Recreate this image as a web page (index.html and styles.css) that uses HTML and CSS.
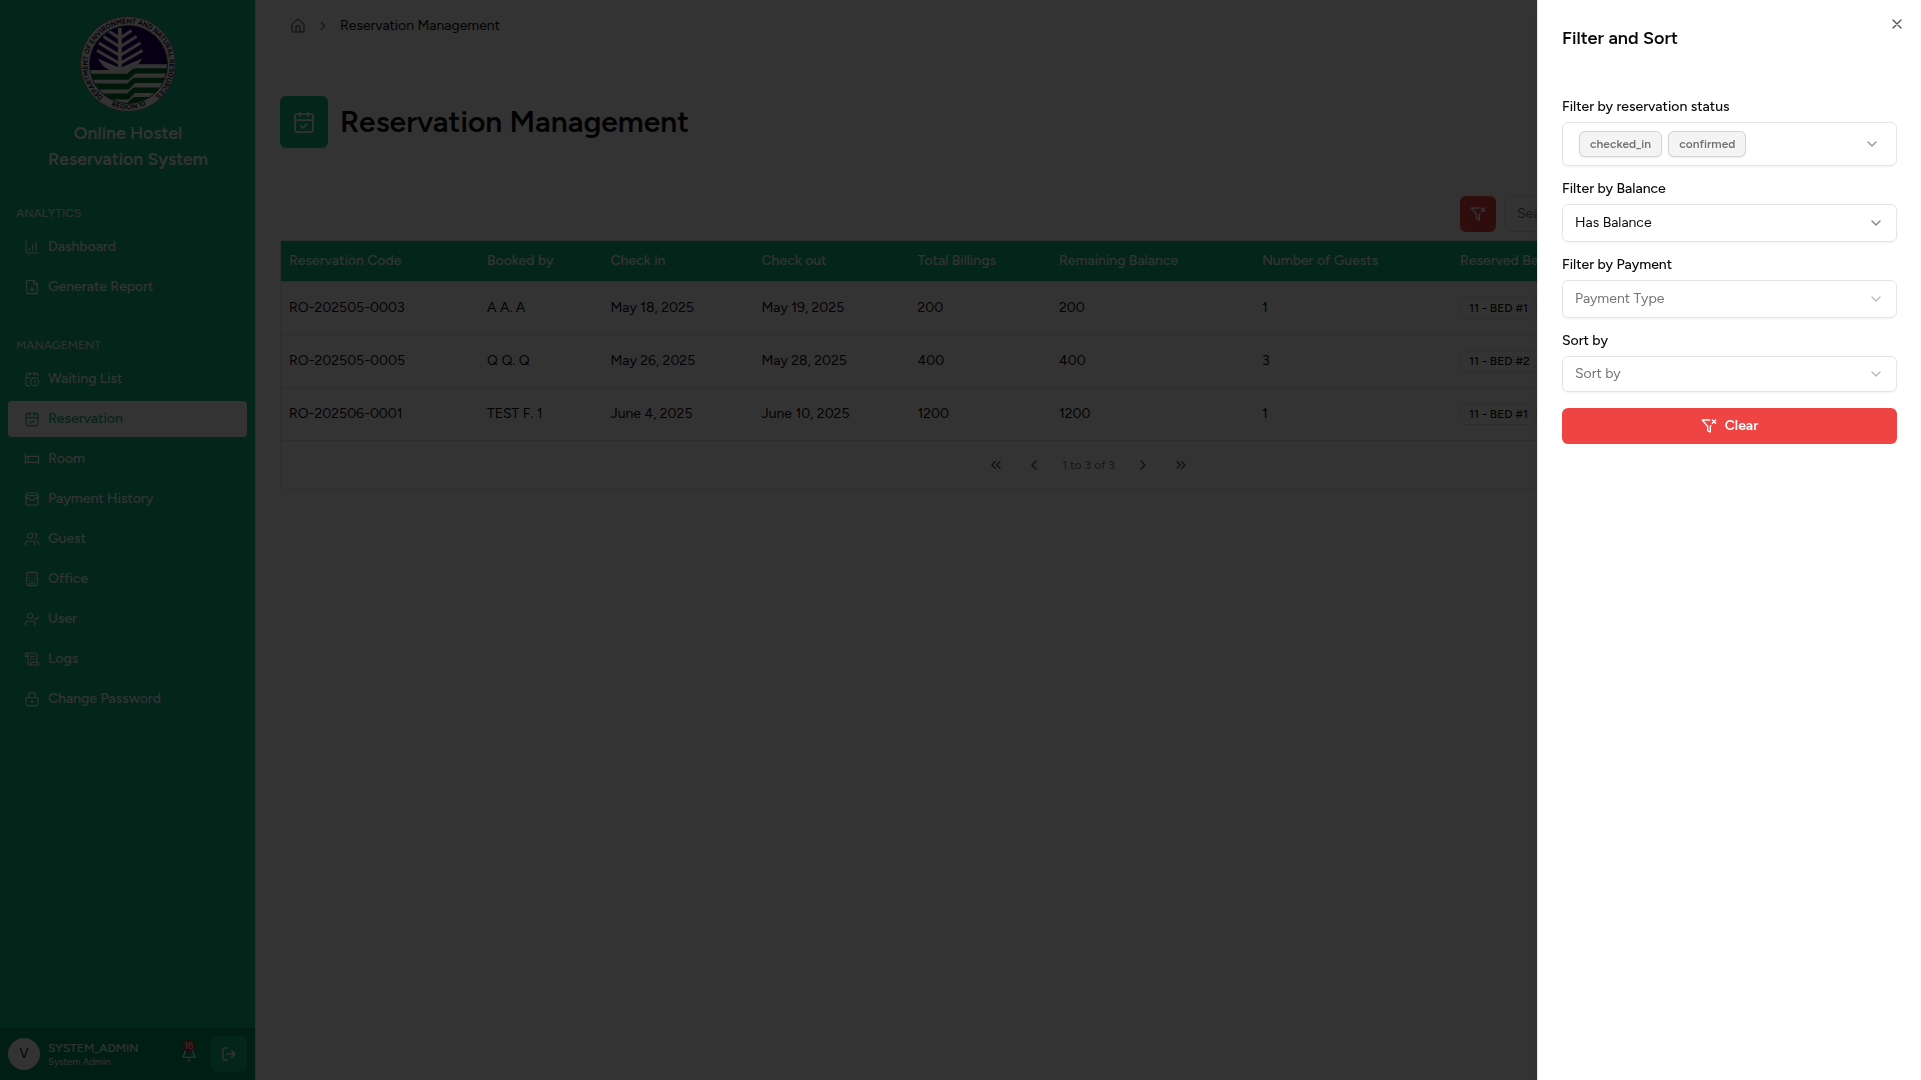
FILE: index.html
```html
<!DOCTYPE html>
<html lang="en">
<head>
<meta charset="utf-8">
<title>Reservation Management</title>
<link rel="stylesheet" href="styles.css">
</head>
<body>
<svg class="sprite" aria-hidden="true">
  <symbol id="chart" viewBox="0 0 24 24"><path d="M13 17V9M18 17V5M3 3v16a2 2 0 0 0 2 2h16M8 17v-3"/></symbol>
  <symbol id="file-down" viewBox="0 0 24 24"><path d="M15 2H6a2 2 0 0 0-2 2v16a2 2 0 0 0 2 2h12a2 2 0 0 0 2-2V7ZM14 2v4a2 2 0 0 0 2 2h4M12 18v-6M9 15l3 3 3-3"/></symbol>
  <symbol id="calendar-clock" viewBox="0 0 24 24"><path d="M21 7.5V6a2 2 0 0 0-2-2H5a2 2 0 0 0-2 2v14a2 2 0 0 0 2 2h3.5M16 2v4M8 2v4M3 10h5M17.5 17.5 16 16.3V14"/><circle cx="16" cy="16" r="6"/></symbol>
  <symbol id="calendar-check" viewBox="0 0 24 24"><path d="M8 2v4M16 2v4M3 10h18M9 16l2 2 4-4"/><rect x="3" y="4" width="18" height="18" rx="2"/></symbol>
  <symbol id="bed" viewBox="0 0 24 24"><path d="M2 4v16M2 8h18a2 2 0 0 1 2 2v10M2 17h20M6 8v9"/></symbol>
  <symbol id="wallet" viewBox="0 0 24 24"><rect x="3" y="3" width="18" height="18" rx="2"/><path d="M3 9a2 2 0 0 1 2-2h14a2 2 0 0 1 2 2M3 11h3c.8 0 1.6.3 2.1.9l1.1.9c1.6 1.6 4.1 1.6 5.7 0l1.1-.9c.5-.5 1.3-.9 2.1-.9H21"/></symbol>
  <symbol id="users" viewBox="0 0 24 24"><path d="M16 21v-2a4 4 0 0 0-4-4H6a4 4 0 0 0-4 4v2M22 21v-2a4 4 0 0 0-3-3.87M16 3.13a4 4 0 0 1 0 7.75"/><circle cx="9" cy="7" r="4"/></symbol>
  <symbol id="building" viewBox="0 0 24 24"><rect x="4" y="2" width="16" height="20" rx="2"/><path d="M9 22v-4h6v4M8 6h.01M16 6h.01M12 6h.01M12 10h.01M12 14h.01M16 10h.01M16 14h.01M8 10h.01M8 14h.01"/></symbol>
  <symbol id="user-check" viewBox="0 0 24 24"><path d="M16 21v-2a4 4 0 0 0-4-4H6a4 4 0 0 0-4 4v2M16 11l2 2 4-4"/><circle cx="9" cy="7" r="4"/></symbol>
  <symbol id="scroll" viewBox="0 0 24 24"><path d="M15 12h-5M15 8h-5M19 17V5a2 2 0 0 0-2-2H4M8 21h12a2 2 0 0 0 2-2v-1a1 1 0 0 0-1-1H11a1 1 0 0 0-1 1v1a2 2 0 1 1-4 0V5a2 2 0 1 0-4 0v2a1 1 0 0 0 1 1h3"/></symbol>
  <symbol id="lock" viewBox="0 0 24 24"><circle cx="12" cy="16" r="1"/><rect x="3" y="10" width="18" height="12" rx="2"/><path d="M7 10V7a5 5 0 0 1 10 0v3"/></symbol>
  <symbol id="house" viewBox="0 0 24 24"><path d="M15 21v-8a1 1 0 0 0-1-1h-4a1 1 0 0 0-1 1v8M3 10a2 2 0 0 1 .709-1.528l7-5.999a2 2 0 0 1 2.582 0l7 5.999A2 2 0 0 1 21 10v9a2 2 0 0 1-2 2H5a2 2 0 0 1-2-2z"/></symbol>
  <symbol id="bell" viewBox="0 0 24 24"><path d="M10.268 21a2 2 0 0 0 3.464 0M3.262 15.326A1 1 0 0 0 4 17h16a1 1 0 0 0 .74-1.673C19.41 13.956 18 12.499 18 8A6 6 0 0 0 6 8c0 4.499-1.411 5.956-2.738 7.326"/></symbol>
  <symbol id="log-out" viewBox="0 0 24 24"><path d="M9 21H5a2 2 0 0 1-2-2V5a2 2 0 0 1 2-2h4M16 17l5-5-5-5M21 12H9"/></symbol>
  <symbol id="filter-x" viewBox="0 0 24 24"><path d="M13.013 3H2l8 9.46V19l4 2v-8.54l.9-1.055M22 3l-5 5M17 3l5 5"/></symbol>
  <symbol id="right" viewBox="0 0 24 24"><path d="m9 18 6-6-6-6"/></symbol>
  <symbol id="left" viewBox="0 0 24 24"><path d="m15 18-6-6 6-6"/></symbol>
  <symbol id="first" viewBox="0 0 24 24"><path d="m11 17-5-5 5-5M18 17l-5-5 5-5"/></symbol>
  <symbol id="last" viewBox="0 0 24 24"><path d="m6 17 5-5-5-5M13 17l5-5-5-5"/></symbol>
  <symbol id="down" viewBox="0 0 24 24"><path d="m6 9 6 6 6-6"/></symbol>
  <symbol id="x" viewBox="0 0 24 24"><path d="M18 6 6 18M6 6l12 12"/></symbol>
</svg>

<div class="app">
  <aside class="sidebar">
    <div class="brand">
      <svg class="logo" viewBox="0 0 96 96">
        <defs>
          <clipPath id="disc"><circle cx="48.5" cy="48.5" r="38.8"/></clipPath>
          <path id="arc-top" d="M23.3 80.8A41 41 0 1 1 73.7 80.8"/>
          <path id="arc-bottom" d="M27 88A45.8 45.8 0 0 0 69 88"/>
        </defs>
        <circle cx="48" cy="48" r="47.5" fill="#fff" stroke="#777" stroke-width="1"/>
        <g clip-path="url(#disc)">
          <rect width="96" height="96" fill="#230069"/>
          <path d="M0 54H47L54 48.3H96V96H0Z" fill="#fff"/>
          <g fill="#00702f">
            <path d="M0 57.7H47L53.5 52.3H96V57.5H55L48.5 63.7H0Z"/>
            <path d="M0 67.5H47L53.5 61.7H96V67H55L48.5 73.5H0Z"/>
            <path d="M0 77.5H47L53.5 71.5H96V77H55L48.5 83.5H0Z"/>
            <path d="M47 87.3L53.5 81H96V90H47Z"/>
          </g>
          <g fill="none" stroke="#fff" stroke-width="3">
            <path d="M39.8 12V55" stroke-width="3.8"/>
            <path d="M28 14.5 39.8 22.5 51.5 14.5M23.5 20.5 39.8 31 56.5 20.5M19 27 39.8 39.5 60.5 27M17 34.5 39.8 47.5 62.5 34.5"/>
          </g>
          <path d="M18 42.5 39.8 52 62 42.5Q58 51 50 54.5H30Q22 51 18 42.5Z" fill="#fff"/>
        </g>
        <circle cx="48.5" cy="48.5" r="39" fill="none" stroke="#222" stroke-width=".8"/>
        <text class="seal"><textPath href="#arc-top" textLength="201" lengthAdjust="spacingAndGlyphs">DEPARTMENT OF ENVIRONMENT AND NATURAL RESOURCES</textPath></text>
        <text class="seal seal-green"><textPath href="#arc-bottom" startOffset="4.5" textLength="36" lengthAdjust="spacingAndGlyphs">REGION 10</textPath></text>
      </svg>
      <div class="brand-name">Online Hostel<br>Reservation System</div>
    </div>
    <nav>
      <div class="group-label">ANALYTICS</div>
      <a class="item"><svg class="icon"><use href="#chart"/></svg>Dashboard</a>
      <a class="item"><svg class="icon"><use href="#file-down"/></svg>Generate Report</a>
      <div class="group-label second">MANAGEMENT</div>
      <a class="item"><svg class="icon"><use href="#calendar-clock"/></svg>Waiting List</a>
      <a class="item active"><svg class="icon"><use href="#calendar-check"/></svg>Reservation</a>
      <a class="item"><svg class="icon"><use href="#bed"/></svg>Room</a>
      <a class="item"><svg class="icon"><use href="#wallet"/></svg>Payment History</a>
      <a class="item"><svg class="icon"><use href="#users"/></svg>Guest</a>
      <a class="item"><svg class="icon"><use href="#building"/></svg>Office</a>
      <a class="item"><svg class="icon"><use href="#user-check"/></svg>User</a>
      <a class="item"><svg class="icon"><use href="#scroll"/></svg>Logs</a>
      <a class="item"><svg class="icon"><use href="#lock"/></svg>Change Password</a>
    </nav>
    <footer class="account">
      <div class="avatar">V</div>
      <div class="who"><div class="who-name">SYSTEM_ADMIN</div><div class="who-role">System Admin</div></div>
      <div class="bell"><svg class="icon"><use href="#bell"/></svg><span class="count">16</span></div>
      <button class="logout"><svg class="icon"><use href="#log-out"/></svg></button>
    </footer>
  </aside>

  <main class="main">
    <div class="crumbs">
      <svg class="icon"><use href="#house"/></svg>
      <svg class="icon small"><use href="#right"/></svg>
      <span>Reservation Management</span>
    </div>
    <div class="heading">
      <div class="heading-icon"><svg class="icon large"><use href="#calendar-check"/></svg></div>
      <h1>Reservation Management</h1>
    </div>
    <div class="toolbar">
      <button class="filter"><svg class="icon"><use href="#filter-x"/></svg></button>
      <div class="search">Search...</div>
    </div>
    <div class="table">
      <div class="row head"><span>Reservation Code</span><span>Booked by</span><span>Check in</span><span>Check out</span><span>Total Billings</span><span>Remaining Balance</span><span>Number of Guests</span><span>Reserved Beds</span></div>
      <div class="row"><span>RO-202505-0003</span><span>A A. A</span><span>May 18, 2025</span><span>May 19, 2025</span><span>200</span><span>200</span><span>1</span><span><b class="bed-tag">11 - BED #1</b></span></div>
      <div class="row"><span>RO-202505-0005</span><span>Q Q. Q</span><span>May 26, 2025</span><span>May 28, 2025</span><span>400</span><span>400</span><span>3</span><span><b class="bed-tag">11 - BED #2</b></span></div>
      <div class="row"><span>RO-202506-0001</span><span>TEST F. 1</span><span>June 4, 2025</span><span>June 10, 2025</span><span>1200</span><span>1200</span><span>1</span><span><b class="bed-tag">11 - BED #1</b></span></div>
      <div class="pager">
        <svg class="icon"><use href="#first"/></svg>
        <svg class="icon"><use href="#left"/></svg>
        <span>1 to 3 of 3</span>
        <svg class="icon"><use href="#right"/></svg>
        <svg class="icon"><use href="#last"/></svg>
      </div>
    </div>
  </main>
</div>

<div class="overlay"></div>
<section class="sheet">
  <svg class="icon close"><use href="#x"/></svg>
  <h2>Filter and Sort</h2>
  <label>Filter by reservation status</label>
  <div class="select multi"><span class="chip">checked_in</span><span class="chip">confirmed</span><svg class="icon"><use href="#down"/></svg></div>
  <label>Filter by Balance</label>
  <div class="select chosen">Has Balance<svg class="icon"><use href="#down"/></svg></div>
  <label>Filter by Payment</label>
  <div class="select">Payment Type<svg class="icon"><use href="#down"/></svg></div>
  <label>Sort by</label>
  <div class="select short">Sort by<svg class="icon"><use href="#down"/></svg></div>
  <button class="clear"><svg class="icon"><use href="#filter-x"/></svg>Clear</button>
</section>
</body>
</html>
```
FILE: styles.css
```css
* { box-sizing: border-box; }
body { margin: 0; height: 100vh; overflow: hidden; background: #fff; color: #0a0a0a; font: 14px/20px Figtree, Lato, sans-serif; }
button { border: 0; padding: 0; font: inherit; color: inherit; }
h1, h2 { margin: 0; font-weight: 600; }
.sprite { position: absolute; width: 0; height: 0; }
.icon { width: 16px; height: 16px; flex: none; fill: none; stroke: currentColor; stroke-width: 2; stroke-linecap: round; stroke-linejoin: round; }
.small { width: 14px; height: 14px; }
.large { width: 24px; height: 24px; }

.app { display: flex; height: 100%; }

/* Sidebar */
.sidebar { width: 256px; flex: none; display: flex; flex-direction: column; background: #10b981; color: #fff; border-right: 1px solid #e5e5e5; }
.brand { padding-top: 16px; display: flex; flex-direction: column; align-items: center; padding-left: 1px; }
.logo { width: 96px; height: 96px; }
.brand-name { margin-top: 8px; text-align: center; font-size: 17.6px; line-height: 26px; font-weight: 600; }
.seal { font: 700 6.9px Figtree, Lato, sans-serif; fill: #1b1440; }
.seal-green { fill: #0a3d22; }
nav { flex: 1; padding: 25px 8px 0; }
.group-label { height: 32px; padding: 0 8px; display: flex; align-items: center; font-size: 12px; font-weight: 500; color: rgba(255, 255, 255, .9); }
.group-label.second { margin-top: 24px; }
.item { height: 36px; margin-bottom: 4px; padding: 0 16px; display: flex; align-items: center; gap: 8px; font-weight: 500; border-radius: 4px; }
.item .icon { stroke-width: 1.75; }
.item.active { background: #fff; color: #10b981; }
.account { height: 52px; padding: 0 8px; display: flex; align-items: center; background: #059669; }
.avatar { width: 32px; height: 32px; border-radius: 50%; background: #fff; color: #0a0a0a; font-size: 13px; display: flex; align-items: center; justify-content: center; }
.who { flex: 1; padding-left: 8px; }
.who-name { font-size: 12px; line-height: 14px; font-weight: 500; }
.who-role { font-size: 9.6px; line-height: 12px; padding-top: 1px; }
.bell { position: relative; display: flex; margin-right: 14px; }
.count { position: absolute; left: 2px; top: -6px; width: 12px; height: 12px; border-radius: 50%; background: #dc2626; font-size: 9px; line-height: 12px; text-align: center; }
.logout { width: 36px; height: 36px; border-radius: 6px; background: #10b981; display: flex; align-items: center; justify-content: center; }

/* Page */
.main { flex: 1; min-width: 0; padding: 0 24px; }
.crumbs { height: 52px; padding-left: 10px; display: flex; align-items: center; gap: 10px; }
.crumbs .icon { color: #737373; }
.heading { margin-top: 44px; height: 52px; display: flex; align-items: center; gap: 12px; }
.heading-icon { width: 48px; height: 52px; border-radius: 6px; background: #10b981; color: #fff; display: flex; align-items: center; justify-content: center; }
.heading-icon .icon { stroke-width: 1.75; }
h1 { font-size: 30px; line-height: 36px; }
.toolbar { margin-top: 48px; display: flex; justify-content: flex-end; gap: 8px; }
.filter { width: 36px; height: 36px; border-radius: 6px; background: #ef4444; color: #fff; display: flex; align-items: center; justify-content: center; }
.search { width: 393px; height: 36px; padding: 7px 12px; border: 1px solid #e5e5e5; border-radius: 6px; color: #737373; }
.table { margin-top: 8px; border: 1px solid #e5e5e5; border-radius: 0 0 6px 6px; overflow: hidden; }
.row { height: 53px; display: grid; grid-template-columns: 198px 123.5px 151px 156px 141.5px 203px 198px 1fr; align-items: center; border-bottom: 1px solid #e5e5e5; }
.row > span { padding-left: 8px; }
.row.head { height: 41px; background: #10b981; color: #fff; font-weight: 500; }
.bed-tag { display: inline-block; height: 22px; padding: 2px 8px; border: 1px solid #e5e5e5; border-radius: 6px; font-size: 12px; line-height: 16px; font-weight: 500; vertical-align: middle; }
.pager { height: 48px; display: flex; align-items: center; justify-content: center; gap: 22px; color: #525252; font-size: 12px; }
.pager span { margin: 0 -2px; color: #737373; }

/* Filter sheet */
.overlay { position: fixed; inset: 0; background: rgba(0, 0, 0, .8); }
.sheet { position: fixed; top: 0; right: 0; bottom: 0; width: 384px; padding: 24px 24px 0; background: #fff; border-left: 1px solid #e5e5e5; box-shadow: 0 10px 15px -3px rgba(0, 0, 0, .1), 0 4px 6px -4px rgba(0, 0, 0, .1); display: flex; flex-direction: column; }
.close { position: absolute; top: 16px; right: 16px; opacity: .7; }
h2 { height: 60px; font-size: 18px; line-height: 28px; }
label { margin-top: 13px; margin-bottom: 5px; font-weight: 500; }
h2 + label { margin-top: 13px; }
.select { height: 38px; padding: 0 12px; display: flex; align-items: center; color: #737373; border: 1px solid #e5e5e5; border-radius: 6px; box-shadow: 0 1px 2px rgba(0, 0, 0, .05); }
.select .icon { margin-left: auto; opacity: .5; }
.select.chosen { color: #0a0a0a; }
.select.short { height: 36px; }
.select.multi { height: 44px; padding: 0 16px; gap: 6px; }
.select.multi .icon { opacity: .75; }
.chip { height: 26px; padding: 4px 10px; border: 1px solid #d4d4d4; border-radius: 6px; background: #f4f4f4; font-size: 12px; line-height: 16px; font-weight: 600; box-shadow: 0 1px 2px rgba(0, 0, 0, .08); }
.clear { margin-top: 16px; height: 36px; border-radius: 6px; background: #ef4444; color: #fff; font-weight: 600; display: flex; align-items: center; justify-content: center; gap: 8px; }
```
